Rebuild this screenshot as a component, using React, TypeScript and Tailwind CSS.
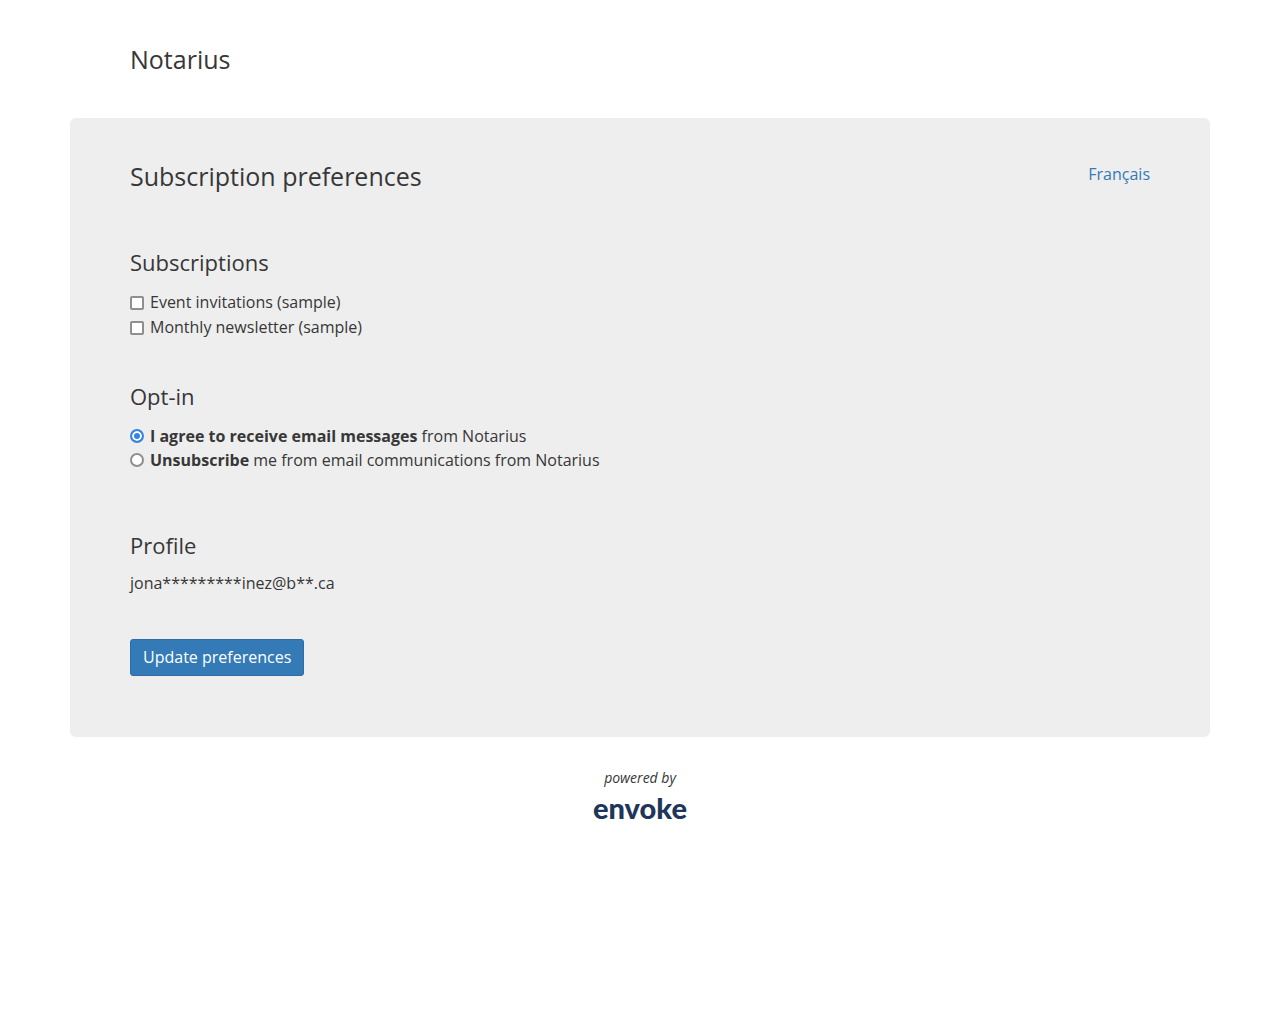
import React, { useState } from "react";

type Subscription = {
  id: string;
  label: string;
};

const subscriptions: Subscription[] = [
  { id: "events", label: "Event invitations (sample)" },
  { id: "newsletter", label: "Monthly newsletter (sample)" },
];

const SectionTitle = ({ children }: { children: React.ReactNode }) => (
  <h2 className="text-[22px] leading-6 mb-4">{children}</h2>
);

const App = () => {
  const [selected, setSelected] = useState<string[]>([]);
  const [consent, setConsent] = useState("agree");

  const toggle = (id: string) => {
    setSelected((prev) =>
      prev.includes(id) ? prev.filter((item) => item !== id) : [...prev, id]
    );
  };

  const radioClass =
    "size-3.5 shrink-0 appearance-none rounded-full border-2 border-[#8f8f8f] bg-white checked:border-[#3584e4] checked:bg-[#3584e4] checked:shadow-[inset_0_0_0_2px_#fff]";

  return (
    <div className="min-h-screen bg-white font-['Open_Sans',sans-serif] text-base text-[#373737]">
      <div className="mx-auto max-w-[1140px]">
        <header className="px-[60px] pt-[45px] pb-[45px]">
          <h1 className="text-[25px] leading-7">Notarius</h1>
        </header>

        <main className="rounded-md bg-[#eee] px-[60px] pt-11 pb-[61px]">
          <div className="flex items-start justify-between mb-[60px]">
            <h1 className="text-[25px] leading-7">Subscription preferences</h1>
            <a href="#fr" className="leading-6 text-[#337ab7]">
              Français
            </a>
          </div>

          <form onSubmit={(e) => e.preventDefault()}>
            <section className="mb-11">
              <SectionTitle>Subscriptions</SectionTitle>
              {subscriptions.map((item) => (
                <label
                  key={item.id}
                  className="flex items-center gap-1.5 leading-[25px]"
                >
                  <input
                    type="checkbox"
                    checked={selected.includes(item.id)}
                    onChange={() => toggle(item.id)}
                    className="size-3.5 shrink-0 appearance-none rounded-xs border-2 border-[#8f8f8f] bg-white checked:bg-[#3584e4]"
                  />
                  <span>{item.label}</span>
                </label>
              ))}
            </section>

            <section className="mb-[61px]">
              <SectionTitle>Opt-in</SectionTitle>
              <label className="flex items-center gap-1.5 leading-6">
                <input
                  type="radio"
                  name="consent"
                  checked={consent === "agree"}
                  onChange={() => setConsent("agree")}
                  className={radioClass}
                />
                <span>
                  <b>I agree to receive email messages</b> from Notarius
                </span>
              </label>
              <label className="flex items-center gap-1.5 leading-6">
                <input
                  type="radio"
                  name="consent"
                  checked={consent === "unsubscribe"}
                  onChange={() => setConsent("unsubscribe")}
                  className={radioClass}
                />
                <span>
                  <b>Unsubscribe</b> me from email communications from Notarius
                </span>
              </label>
            </section>

            <section className="mb-[46px]">
              <SectionTitle>Profile</SectionTitle>
              <p className="leading-5">jona*********inez@b**.ca</p>
            </section>

            <button
              type="submit"
              className="rounded-[3px] border border-[#2e6da4] bg-[#337ab7] px-3 py-1.5 leading-[23px] text-white"
            >
              Update preferences
            </button>
          </form>
        </main>

        <footer className="flex flex-col items-center pt-[31px]">
          <p className="text-sm leading-5 italic">powered by</p>
          <a
            href="#envoke"
            className="font-['Lato',sans-serif] text-[29px] leading-10 font-black text-[#20355a]"
          >
            envoke
          </a>
        </footer>
      </div>
    </div>
  );
};

export default App;
